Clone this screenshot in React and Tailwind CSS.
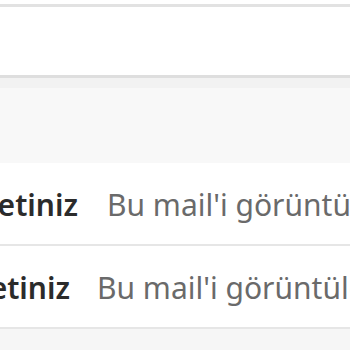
import React from "react";

const rows = [
  { subject: "Hediye çekinizi hemen iletiniz", preview: "Bu mail'i görüntüleyemiyorsanız tıklayınız", cut: "w-[78px]", gap: "ml-[29px]" },
  { subject: "Siparişiniz için lütfen takip etiniz", preview: "Bu mail'i görüntüleyemiyorsanız tıklayınız", cut: "w-[70px]", gap: "ml-[27px]" },
];

export default function App() {
  return (
    <div className="w-[350px] h-[350px] overflow-hidden bg-white font-['Noto_Sans',sans-serif]">
      {/* toolbar strip */}
      <div className="mt-[4px] h-[71px] border-t-[3px] border-[#e2e2e2] bg-white" />
      <div className="border-t-[3px] border-[#dedede]" />
      <div className="h-[10px] bg-[#f2f2f2]" />
      <div className="h-[75px] bg-[#f8f8f8]" />

      {/* mail list */}
      {rows.map((r, i) => (
        <div key={i} className="flex h-[83px] items-center border-b-2 border-[#e6e6e6] bg-white pt-[2px] whitespace-nowrap leading-none">
          <div className={`${r.cut} flex shrink-0 justify-end overflow-hidden`}>
            <span className="text-[30px] font-semibold text-[#2b2b2b]">{r.subject}</span>
          </div>
          <span className={`${r.gap} text-[30px] text-[#6a6a6a]`}>{r.preview}</span>
        </div>
      ))}
      <div className="h-[30px] bg-[#f6f6f6]" />
    </div>
  );
}
